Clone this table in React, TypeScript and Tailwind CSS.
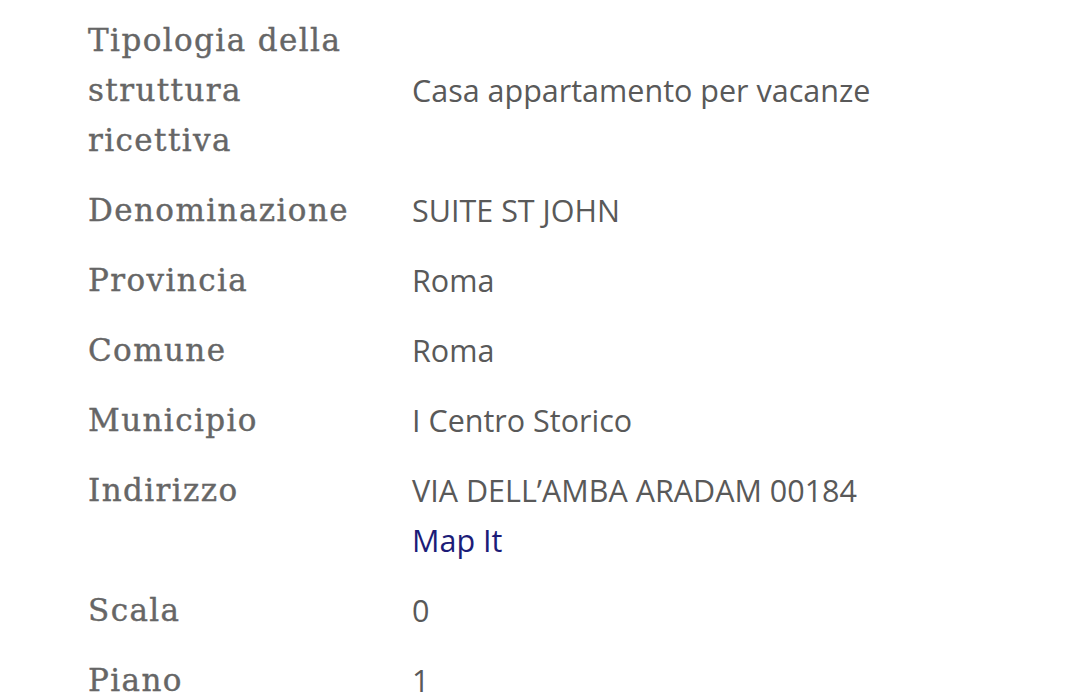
const rows: { label: string[]; value: string[]; link?: string; center?: boolean }[] = [
  { label: ["Tipologia della", "struttura", "ricettiva"], value: ["Casa appartamento per vacanze"], center: true },
  { label: ["Denominazione"], value: ["SUITE ST JOHN"] },
  { label: ["Provincia"], value: ["Roma"] },
  { label: ["Comune"], value: ["Roma"] },
  { label: ["Municipio"], value: ["I Centro Storico"] },
  { label: ["Indirizzo"], value: ["VIA DELL’AMBA ARADAM 00184"], link: "Map It" },
  { label: ["Scala"], value: ["0"] },
  { label: ["Piano"], value: ["1"] },
];

export default function App() {
  return (
    <div className="min-h-screen w-[1080px] bg-white pl-[88px] pt-[15px]">
      <div className="flex flex-col gap-[20px]">
        {rows.map((r, i) => (
          <div key={i} className={`flex ${r.center ? "items-center" : "items-start"}`}>
            <div className="w-[324px] shrink-0 font-['DejaVu_Serif',serif] text-[31px] leading-[50px] tracking-[1.4px] text-[#666666] [-webkit-text-stroke:0.4px_#666666]">
              {r.label.map((l) => (
                <div key={l}>{l}</div>
              ))}
            </div>
            <div className="font-['Open_Sans',sans-serif] text-[30.5px] leading-[50px] text-[#595959]">
              {r.value.map((v) => (
                <div key={v}>{v}</div>
              ))}
              {r.link && <a className="block text-[#1c1c78]">{r.link}</a>}
            </div>
          </div>
        ))}
      </div>
    </div>
  );
}
